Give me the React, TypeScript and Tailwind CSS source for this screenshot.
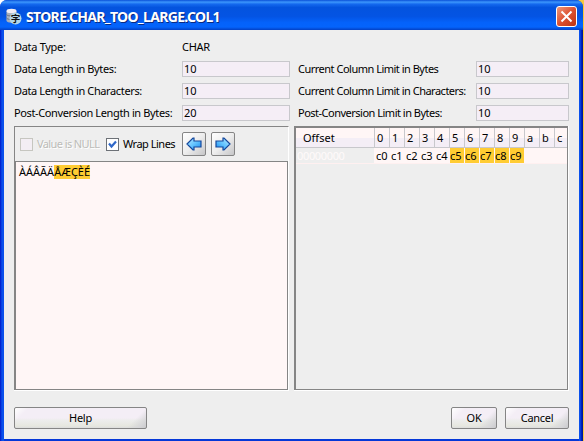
import React from 'react';

const FONT = "font-['Noto_Sans','DejaVu_Sans',sans-serif]";

function Row({ label, value, label2, value2 }: { label: string; value: string; label2: string; value2: string }) {
  return (
    <div className="flex h-[22px] items-center whitespace-pre">
      <span className="w-[168px] tracking-[-0.37px]">{label}</span>
      <span className="h-4 w-[108px] border border-[#c8c8cc] bg-[#f5eef6] pl-px leading-[14px]">{value}</span>
      <span className="ml-2 w-[178px] tracking-[-0.5px]">{label2}</span>
      <span className="h-4 w-[93px] border border-[#c8c8cc] bg-[#f5eef6] pl-px leading-[14px]">{value2}</span>
    </div>
  );
}

function Arrow({ flip }: { flip?: boolean }) {
  return (
    <div className="flex h-6 w-6 items-center justify-center rounded-[2px] border border-[#858585] bg-linear-to-br from-white via-[#ededed] to-[#c6c6c8]">
      <svg width="16" height="14" viewBox="0 0 16 14" className={flip ? '-scale-x-100' : ''}>
        <defs>
          <linearGradient id="blueArrow" x1="0" y1="0" x2="1" y2="1">
            <stop offset="0" stopColor="#bceaff" />
            <stop offset=".5" stopColor="#64c4ff" />
            <stop offset="1" stopColor="#1689ee" />
          </linearGradient>
        </defs>
        <path d="M1 7 L7 1 L8 1 L8 4 L15 4 L15 10 L8 10 L8 13 L7 13 Z" fill="url(#blueArrow)" stroke="#16489c" strokeWidth="1.2" />
      </svg>
    </div>
  );
}

function Button({ children, width }: { children: string; width: string }) {
  return (
    <button className={`h-[22px] rounded-[2px] border border-[#858585] bg-[linear-gradient(135deg,#fff_0,transparent_10px),linear-gradient(315deg,#cacacc_0,#d6d6d8_5px,transparent_14px),linear-gradient(180deg,#f4eef6_0%,#f4eef6_50%,#ededed_60%,#e6e7df_90%,#dcdcdc_100%)] leading-[20px] tracking-[-0.3px] ${width}`}>
      {children}
    </button>
  );
}

export default function App() {
  const cells = ['0', '1', '2', '3', '4', '5', '6', '7', '8', '9', 'a', 'b', 'c'];
  return (
    <div className="h-[441px] w-[584px] overflow-hidden bg-[linear-gradient(90deg,#fff_50%,#f7c93c_50%)]">
      <div className={`flex h-[441px] w-[583px] flex-col overflow-hidden rounded-t-[7px] bg-[linear-gradient(90deg,#0016c8_0,#0a50ec_2px,#0a50ec_580px,#0028c8_581px,#001090_583px)] text-[11px] text-black ${FONT}`}>
        <div className="flex h-[30px] shrink-0 items-center bg-[linear-gradient(180deg,#0a50d8_0%,#3c96fc_7%,#1468ee_14%,#0453de_25%,#0454e4_55%,#0462fa_75%,#0464fc_90%,#0340c4_100%)] pl-[5px] pr-[6px] pt-[2px]">
          <svg width="17" height="17" viewBox="0 0 17 17">
            <path d="M1.500 3v9.500c0 3 10 3 10 0V3z" fill="#a9afba" />
            <ellipse cx="6.500" cy="3" rx="5" ry="2.200" fill="#f3eef3" />
            <path d="M1.500 6.500c1 2 9 2 10 0M1.500 10c1 2 9 2 10 0" fill="none" stroke="#6b7080" />
            <circle cx="10.500" cy="10.500" r="6" fill="#b4d6e6" />
            <text x="5.800" y="14.200" fontSize="9.500" fontWeight="700" fill="#111" fontFamily="'Noto Sans CJK SC', sans-serif">字</text>
          </svg>
          <span className="ml-[4px] flex-1 whitespace-nowrap text-[14px] font-bold tracking-[-0.66px] text-white [text-shadow:1px_1px_#0a2a80]">STORE.CHAR_TOO_LARGE.COL1</span>
          <span className="flex h-[21px] w-[21px] items-center justify-center rounded-[3px] border border-white bg-linear-to-br from-[#ee9678] via-[#dc5030] to-[#bd3410]">
            <svg width="13" height="13" viewBox="0 0 13 13"><path d="M1.500 1.500l10 10M11.500 1.500l-10 10" stroke="white" strokeWidth="2" /></svg>
          </span>
        </div>
        <div className="mb-[2px] ml-[4px] mr-[4px] flex h-[409px] flex-col bg-[#eee] pl-[10px] pr-[10px] pt-[6px] shadow-[0_2px_0_#0538d8]">
          <div className="flex h-[22px] items-center tracking-[-0.3px]">
            <span className="w-[168px]">Data Type:</span>
            <span>CHAR</span>
          </div>
          <Row label="Data Length in Bytes:" value="10" label2="Current Column Limit in Bytes" value2="10" />
          <Row label="Data Length in Characters:" value="10" label2="Current Column Limit in Characters:" value2="10" />
          <Row label="Post-Conversion Length in Bytes:" value="20" label2="Post-Conversion Limit in Bytes:" value2="10" />
          <div className="mt-[2px] flex gap-[5px]">
            <div className="flex h-[265px] w-[275px] flex-col">
              <div className="flex h-[35px] items-center border-l border-r border-t border-l-[#858585] border-r-white border-t-[#858585] pl-[5px]">
                <span className="h-[13px] w-[13px] border border-[#c6c6c0] bg-[#f3eef4]" />
                <span className="ml-[4px] w-[69px] whitespace-nowrap tracking-[-0.6px] text-[#bcbcb8] [text-shadow:1px_1px_white]">Value is NULL</span>
                <span className="flex h-[13px] w-[13px] items-center justify-center border border-[#6d7177] bg-white">
                  <svg width="9" height="9" viewBox="0 0 9 9"><path d="M1 3.500L3.500 6.500L8 1.500" fill="none" stroke="#3068c8" strokeWidth="2.200" /></svg>
                </span>
                <span className="ml-[4px] w-[59px] whitespace-nowrap tracking-[-0.5px]">Wrap Lines</span>
                <div className="flex gap-[5px]"><Arrow /><Arrow flip /></div>
              </div>
              <div className="flex-1 border-b border-r border-white">
                <div className="h-full border border-l-2 border-[#858585] bg-[#fff6f6] pl-[3px] pt-[3px] leading-[14px]">
                  <span>ÀÁÂÃÄ</span><span className="inline-block h-[14px] bg-[#ffcc33]">ÅÆÇÈÉ</span>
                </div>
              </div>
            </div>
            <div className="h-[265px] w-[275px] border-b border-r border-white">
              <div className="h-full border-b border-l-2 border-r border-t-2 border-[#858585]">
                <div className="flex h-[20px] border-b border-[#c8c8cc] bg-[linear-gradient(180deg,#fff6f6_55%,#f4eef6_55%)] leading-[20px]">
                  <span className="w-[79px] pl-[7px]">Offset</span>
                  {cells.map((c) => <span key={c} className="w-[15px] shrink-0 border-l border-[#c8c8cc] pl-[2px] last:w-[13px]">{c}</span>)}
                </div>
                <div className="flex h-4 border-b border-[#fff0f0] leading-[15px]">
                  <span className="w-[79px] pl-px tracking-[-0.35px] text-[#fffafa]">00000000</span>
                  {cells.map((c, i) => (
                    <span key={c} className={`w-[15px] shrink-0 border-l border-[#fff6f6] last:w-[13px] ${i > 4 && i < 10 ? 'bg-[#ffcc33]' : 'bg-[#fff6f6] pl-px'}`}>{i < 10 ? 'c' + c : ''}</span>
                  ))}
                </div>
              </div>
            </div>
          </div>
          <div className="mt-[16px] flex">
            <Button width="w-[133px]">Help</Button>
            <span className="flex-1" />
            <Button width="w-[46px] mr-[8px]">OK</Button>
            <Button width="w-[64px]">Cancel</Button>
          </div>
        </div>
      </div>
    </div>
  );
}
